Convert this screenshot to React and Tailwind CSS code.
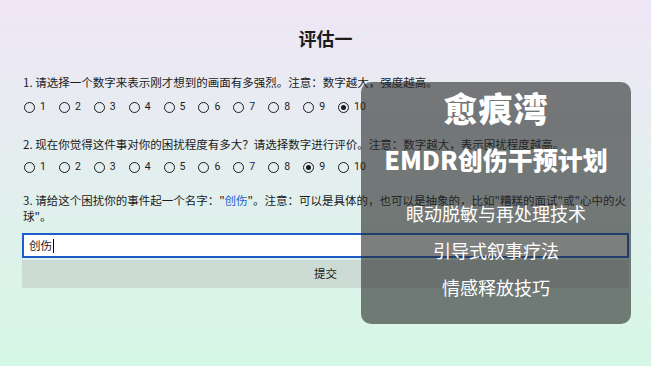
import React from "react";

const font = { fontFamily: '"Noto Sans CJK SC", "Noto Sans", sans-serif' };

function Radio({ n, checked }) {
  return (
    <div className="flex w-[34.9px] shrink-0 items-center">
      <span className="flex h-[11px] w-[11px] items-center justify-center rounded-full border-[1.5px] border-[#1b1b1b]">
        {checked && <span className="h-[5px] w-[5px] rounded-full bg-[#1b1b1b]" />}
      </span>
      <span className="ml-[5px] text-[10.5px] leading-[12px] text-[#1b1b1b] font-['Roboto',sans-serif]">{n}</span>
    </div>
  );
}

function Row({ sel }) {
  return (
    <div className="flex">
      {[1, 2, 3, 4, 5, 6, 7, 8, 9, 10].map((n) => (
        <Radio key={n} n={n} checked={n === sel} />
      ))}
    </div>
  );
}

export default function App() {
  return (
    <div
      className="relative h-[366px] w-[651px] overflow-hidden bg-gradient-to-b from-[#efe6f6] to-[#d5f7e5] text-[#1b1b1b]"
      style={font}
    >
      <div className="px-[22px] pt-[28px]">
        <h1 className="text-center text-[18px] font-bold leading-[20px]">评估一</h1>
        <p className="mt-[27px] pl-[1px] text-[11.5px] leading-[14px]">
          1. 请选择一个数字来表示刚才想到的画面有多强烈。注意：数字越大，强度越高。
        </p>
        <div className="mt-[12px] pl-[2px]">
          <Row sel={10} />
        </div>
        <p className="mt-[24px] pl-[1px] text-[11.5px] leading-[14px]">
          2. 现在你觉得这件事对你的困扰程度有多大？请选择数字进行评价。注意：数字越大，表示困扰程度越高。
        </p>
        <div className="mt-[10px] pl-[2px]">
          <Row sel={9} />
        </div>
        <p className="mt-[19px] pl-[1px] text-[11.5px] leading-[16px]">
          3. 请给这个困扰你的事件起一个名字："<span className="text-[#1f63d4]">创伤</span>"。注意：可以是具体的，也可以是抽象的，比如"糟糕的面试"或"心中的火球"。
        </p>
        <div className="mt-[9px] flex h-[25px] items-center border-2 border-[#1d5cc9] bg-white px-[5px] text-[11.5px]">
          <span>创伤</span>
          <span className="ml-[1px] h-[14px] w-[1px] bg-black" />
        </div>
        <div className="mt-[2px] flex h-[28px] items-center justify-center bg-[#cddbd5] text-[11.5px]">
          提交
        </div>
      </div>

      <div className="absolute left-[361px] top-[82px] flex h-[242px] w-[270px] flex-col items-center rounded-[10px] bg-[rgba(38,40,40,0.6)] text-white">
        <div className="mt-[6px] text-[34px] font-black leading-[40px] tracking-[1px]">愈痕湾</div>
        <div className="mt-[16px] text-[25px] font-black leading-[30px]">EMDR创伤干预计划</div>
        <div className="mt-[28px] text-[18px] leading-[22px]">眼动脱敏与再处理技术</div>
        <div className="mt-[15px] text-[18px] leading-[22px]">引导式叙事疗法</div>
        <div className="mt-[15px] text-[18px] leading-[22px]">情感释放技巧</div>
      </div>
    </div>
  );
}
